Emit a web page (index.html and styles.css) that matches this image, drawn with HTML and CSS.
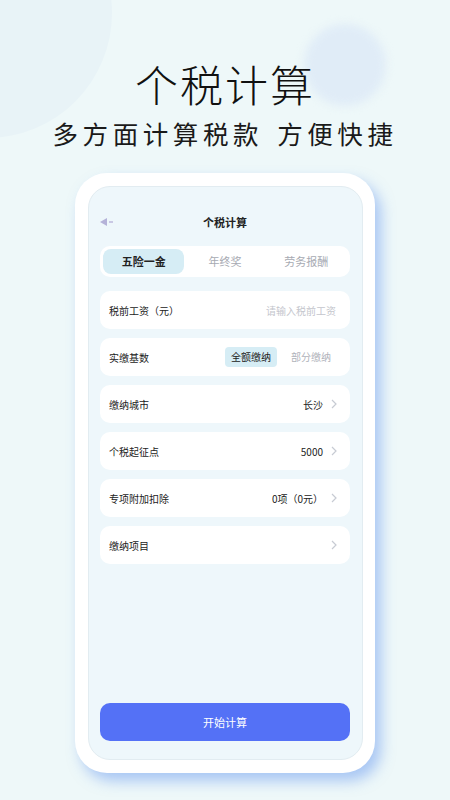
FILE: index.html
```html
<!DOCTYPE html>
<html lang="zh-CN">
<head>
    <meta charset="UTF-8">
    <meta name="viewport" content="width=device-width, initial-scale=1.0">
    <title>个税计算</title>
    <link rel="stylesheet" href="styles.css">
</head>
<body>
    <div class="page">
        <div class="blob blob-left"></div>
        <div class="blob blob-right"></div>

        <div class="hero">
            <h1 class="hero-title">个税计算</h1>
            <p class="hero-sub">多方面计算税款<span class="hero-gap"></span>方便快捷</p>
        </div>

        <div class="phone">
            <div class="screen">
                <div class="topbar">
                    <svg class="back" width="14" height="8" viewBox="0 0 14 8">
                        <polygon points="0,4 7,0 7,8" fill="#b4b2d8"/>
                        <rect x="9" y="3" width="4" height="2" fill="#c9c8e4"/>
                    </svg>
                    <span class="topbar-title">个税计算</span>
                </div>

                <div class="tabs">
                    <div class="tab active">五险一金</div>
                    <div class="tab">年终奖</div>
                    <div class="tab">劳务报酬</div>
                </div>

                <div class="rows">
                    <div class="row">
                        <span class="row-label">税前工资（元）</span>
                        <span class="row-hint">请输入税前工资</span>
                    </div>
                    <div class="row">
                        <span class="row-label">实缴基数</span>
                        <div class="pills">
                            <span class="pill on">全额缴纳</span>
                            <span class="pill">部分缴纳</span>
                        </div>
                    </div>
                    <div class="row">
                        <span class="row-label">缴纳城市</span>
                        <span class="row-value">长沙<svg class="chev" width="6" height="10" viewBox="0 0 6 10"><path d="M1 1l4 4-4 4" fill="none" stroke="#c7cbd3" stroke-width="1.2"/></svg></span>
                    </div>
                    <div class="row">
                        <span class="row-label">个税起征点</span>
                        <span class="row-value">5000<svg class="chev" width="6" height="10" viewBox="0 0 6 10"><path d="M1 1l4 4-4 4" fill="none" stroke="#c7cbd3" stroke-width="1.2"/></svg></span>
                    </div>
                    <div class="row">
                        <span class="row-label">专项附加扣除</span>
                        <span class="row-value">0项（0元）<svg class="chev" width="6" height="10" viewBox="0 0 6 10"><path d="M1 1l4 4-4 4" fill="none" stroke="#c7cbd3" stroke-width="1.2"/></svg></span>
                    </div>
                    <div class="row">
                        <span class="row-label">缴纳项目</span>
                        <span class="row-value"><svg class="chev" width="6" height="10" viewBox="0 0 6 10"><path d="M1 1l4 4-4 4" fill="none" stroke="#c7cbd3" stroke-width="1.2"/></svg></span>
                    </div>
                </div>

                <button class="start-btn">开始计算</button>
            </div>
        </div>
    </div>
</body>
</html>
```

FILE: styles.css
```css
body {
    margin: 0;
    font-family: "Noto Sans CJK SC", "Noto Sans", sans-serif;
    color: #222;
    background-color: #eef8f9;
}
.page {
    position: relative;
    width: 450px;
    height: 800px;
    overflow: hidden;
    display: flex;
    flex-direction: column;
    align-items: center;
}
.blob {
    position: absolute;
    border-radius: 50%;
}
.blob-left {
    width: 250px;
    height: 250px;
    left: -138px;
    top: -112px;
    background-color: #e8f3f7;
}
.blob-right {
    width: 82px;
    height: 82px;
    left: 304px;
    top: 24px;
    background-color: #e0ecf7;
    filter: blur(4px);
}
.hero {
    position: relative;
    text-align: center;
    padding-top: 58px;
}
.hero-title {
    margin: 0;
    font-size: 43px;
    line-height: 50px;
    font-weight: 300;
    letter-spacing: 2px;
    color: #111;
}
.hero-sub {
    margin: 8px 0 0;
    font-size: 25.5px;
    line-height: 34px;
    font-weight: 400;
    letter-spacing: 4.6px;
    color: #1a1a1a;
}
.hero-gap {
    display: inline-block;
    width: 14px;
}
.phone {
    position: relative;
    margin-top: 23px;
    width: 300px;
    height: 600px;
    box-sizing: border-box;
    padding: 13px 12px 13px 13px;
    background-color: #fff;
    border-radius: 32px;
    box-shadow: 6px 8px 14px rgba(100, 150, 240, 0.5);
}
.screen {
    height: 100%;
    box-sizing: border-box;
    padding: 24px 12px 18px 11px;
    background-color: #eef7fb;
    border: 1px solid #e2ecf1;
    border-radius: 22px;
    display: flex;
    flex-direction: column;
}
.topbar {
    position: relative;
    height: 22px;
    display: flex;
    align-items: center;
    justify-content: center;
}
.back {
    position: absolute;
    left: 0;
    top: 7px;
}
.topbar-title {
    font-size: 11px;
    font-weight: 700;
    color: #222;
}
.tabs {
    margin-top: 13px;
    height: 31px;
    display: flex;
    align-items: center;
    padding: 0 3px;
    background-color: #fff;
    border-radius: 10px;
}
.tab {
    flex: 1;
    height: 25px;
    line-height: 25px;
    text-align: center;
    font-size: 11px;
    color: #a7aab2;
    border-radius: 8px;
}
.tab.active {
    background-color: #d6edf5;
    color: #222;
    font-weight: 700;
}
.rows {
    margin-top: 14px;
    display: flex;
    flex-direction: column;
    gap: 9px;
}
.row {
    height: 38px;
    display: flex;
    align-items: center;
    justify-content: space-between;
    padding: 0 13px 0 9px;
    background-color: #fff;
    border-radius: 10px;
    font-size: 10px;
}
.row-label {
    color: #222;
}
.row-hint {
    color: #c4c6cd;
    padding-right: 1px;
}
.row-value {
    display: flex;
    align-items: center;
    gap: 8px;
    color: #222;
}
.pills {
    display: flex;
    align-items: center;
    gap: 8px;
}
.pill {
    padding: 0 6px;
    height: 20px;
    line-height: 20px;
    border-radius: 4px;
    color: #b0b2ba;
}
.pill.on {
    background-color: #d6edf5;
    color: #222;
}
.start-btn {
    margin-top: auto;
    height: 38px;
    border: none;
    border-radius: 10px;
    background-color: #5471f6;
    color: #fff;
    font-family: inherit;
    font-size: 11px;
}
```
